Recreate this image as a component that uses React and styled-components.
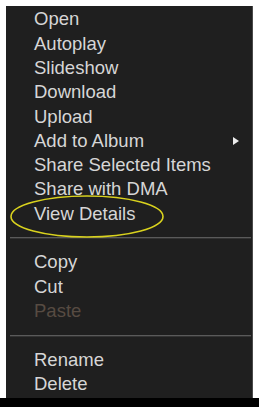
import React from "react";
import styled, { createGlobalStyle } from "styled-components";

const GlobalStyle = createGlobalStyle`
  html, body {
    margin: 0;
    padding: 0;
    background: #ffffff;
  }
  body {
    font-family: "Liberation Sans", Arial, sans-serif;
  }
`;

const Page = styled.div`
  width: 259px;
  height: 407px;
  display: flex;
  flex-direction: column;
  overflow: hidden;
`;

const MenuArea = styled.div`
  flex: 1;
  padding: 6px 6px 0 6px;
  display: flex;
`;

const Menu = styled.ul`
  position: relative;
  flex: 1;
  margin: 0;
  padding: 1.2px 0 1.5px 0;
  list-style: none;
  background: #1f1f1f;
  border-right: 1px solid #4a4a4a;
`;

const Item = styled.li`
  height: 24.33px;
  line-height: 24.33px;
  padding-left: 28px;
  padding-right: 13px;
  display: flex;
  align-items: center;
  justify-content: space-between;
  font-size: 18.5px;
  color: ${(p) => (p.disabled ? "#574b42" : "#d6d6d6")};
  white-space: nowrap;
`;

const SepRow = styled.li`
  height: 24.33px;
  display: flex;
  align-items: center;
  padding: 0 1px 0 4px;
`;

const SepLine = styled.div`
  flex: 1;
  height: 1px;
  background: #5a5a5a;
  border-bottom: 1px solid #333333;
`;

const Arrow = styled.span`
  width: 0;
  height: 0;
  border-top: 4.5px solid transparent;
  border-bottom: 4.5px solid transparent;
  border-left: 6px solid #ececec;
`;

const Highlight = styled.svg`
  position: absolute;
  left: 3px;
  top: 188px;
  pointer-events: none;
`;

const BottomStrip = styled.div`
  height: 9px;
  background: #000000;
`;

const groups = [
  [
    { label: "Open" },
    { label: "Autoplay" },
    { label: "Slideshow" },
    { label: "Download" },
    { label: "Upload" },
    { label: "Add to Album", sub: true },
    { label: "Share Selected Items" },
    { label: "Share with DMA" },
    { label: "View Details" },
  ],
  [{ label: "Copy" }, { label: "Cut" }, { label: "Paste", disabled: true }],
  [{ label: "Rename" }, { label: "Delete" }],
];

export default function App() {
  return (
    <Page>
      <GlobalStyle />
      <MenuArea>
        <Menu>
          {groups.map((group, gi) => (
            <React.Fragment key={gi}>
              {gi > 0 && (
                <SepRow>
                  <SepLine />
                </SepRow>
              )}
              {group.map((item) => (
                <Item key={item.label} disabled={item.disabled}>
                  <span>{item.label}</span>
                  {item.sub && <Arrow />}
                </Item>
              ))}
            </React.Fragment>
          ))}
          <Highlight width="160" height="48" viewBox="0 0 160 48">
            <ellipse
              cx="78"
              cy="22.5"
              rx="76"
              ry="20.5"
              fill="none"
              stroke="#d9d21e"
              strokeWidth="1.6"
            />
          </Highlight>
        </Menu>
      </MenuArea>
      <BottomStrip />
    </Page>
  );
}
